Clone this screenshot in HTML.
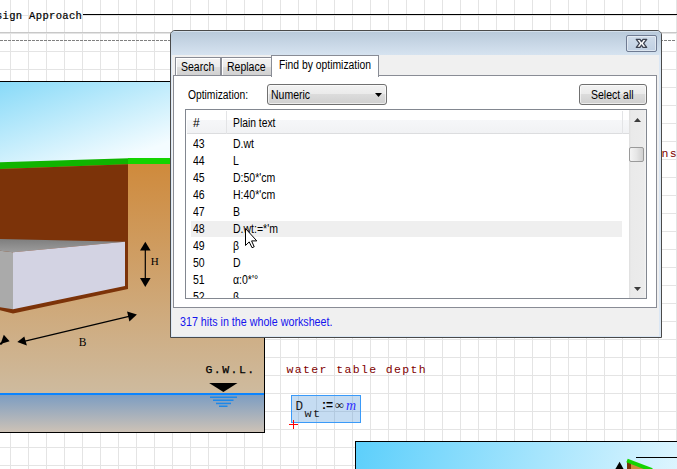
<!DOCTYPE html>
<html><head><meta charset="utf-8">
<style>
html,body{margin:0;padding:0;}
body{width:677px;height:469px;overflow:hidden;position:relative;background:#fff;font-family:"Liberation Sans",sans-serif;}
.abs{position:absolute;}
#grid{position:absolute;left:0;top:0;width:677px;height:469px;
 background-image:linear-gradient(to right,#e4e4e4 1px,transparent 1px),linear-gradient(to bottom,#e4e4e4 1px,transparent 1px);
 background-size:18px 18px;background-position:10px 0,0 15px;}
.mono{font-family:"Liberation Mono",monospace;white-space:pre;}
.ui{font-family:"Liberation Sans",sans-serif;font-size:12px;white-space:pre;color:#000;}
.sx{display:inline-block;transform-origin:0 0;transform:scaleX(0.875);}
</style></head><body>
<div id="grid"></div>

<!-- header -->
<div class="abs mono" style="left:-17.3px;top:10px;font-size:10.5px;line-height:13px;letter-spacing:0.33px;color:#000;-webkit-text-stroke:0.2px #000;">Design Approach</div>
<div class="abs" style="left:83px;top:14px;width:594px;height:1px;background:#000;"></div>
<div class="abs" style="left:0;top:32px;width:677px;height:1px;background:#c8c8c8;"></div>
<div class="abs" style="left:0;top:40px;width:676px;height:1px;background-image:linear-gradient(to right,#808080 3px,transparent 3px);background-size:4px 1px;"></div>

<!-- main illustration -->
<svg class="abs" style="left:0;top:0" width="677" height="469" viewBox="0 0 677 469">
 <defs>
  <linearGradient id="sky" gradientUnits="userSpaceOnUse" x1="0" y1="82" x2="38" y2="189">
   <stop offset="0" stop-color="#88daf8"/><stop offset="1" stop-color="#f4fcff"/>
  </linearGradient>
  <linearGradient id="soil" x1="0" y1="0" x2="0" y2="1">
   <stop offset="0" stop-color="#cf8a3c"/><stop offset="1" stop-color="#cebb9f"/>
  </linearGradient>
  <linearGradient id="water" x1="0" y1="0" x2="0" y2="1">
   <stop offset="0" stop-color="#7a9cc2"/><stop offset="1" stop-color="#cdc2b6"/>
  </linearGradient>
  <linearGradient id="topface" x1="0" y1="0" x2="0" y2="1">
   <stop offset="0" stop-color="#7e7e7e"/><stop offset="1" stop-color="#9c9c9c"/>
  </linearGradient>
  <linearGradient id="sky2" gradientUnits="userSpaceOnUse" x1="355" y1="441" x2="700" y2="540">
   <stop offset="0" stop-color="#5ccffb"/><stop offset="1" stop-color="#eefaff"/>
  </linearGradient>
 </defs>
 <!-- image 1 -->
 <rect x="-1" y="82" width="265" height="90" fill="url(#sky)"/>
 <rect x="-1" y="164" width="265" height="230" fill="url(#soil)"/>
 <rect x="-1" y="394" width="265" height="38" fill="url(#water)"/>
 <!-- grass -->
 <polygon points="-1,162.2 128,158.2 128,164.3 -1,169" fill="#10b400"/>
 <rect x="128" y="158" width="136" height="6" fill="#14d400"/>
 <!-- pit -->
 <polygon points="-1,169 128,164.3 128,289 13,313.5 -1,310" fill="#7c3309"/>
 <!-- block -->
 <polygon points="-1,239 125,241.7 13,252.3 -1,250.6" fill="url(#topface)"/>
 <polygon points="-1,250.6 13,252.3 13,309.3 -1,307" fill="#aaaaaa"/>
 <polygon points="13,252.3 125,241.7 125,286 13,309.3" fill="#d3d3e3"/>
 <!-- H arrow -->
 <line x1="145.3" y1="249" x2="145.3" y2="280" stroke="#000" stroke-width="1.2"/>
 <polygon points="140,250.6 150.6,250.6 145.3,241.7" fill="#000"/>
 <polygon points="140,278 150.6,278 145.3,287" fill="#000"/>
 <text x="150.8" y="265.3" font-family="Liberation Serif" font-size="11" fill="#000">H</text>
 <!-- B arrow -->
 <line x1="24" y1="341.3" x2="129" y2="316.3" stroke="#000" stroke-width="1.3"/>
 <polygon points="17.3,341.9 24.3,336.4 26.9,345.4" fill="#000"/>
 <polygon points="127.1,311.6 136.9,314.5 129.4,321.5" fill="#000"/>
 <polygon points="9.6,341.2 3.8,334.8 0.5,344" fill="#000"/>
 <polygon points="-1,343 3,342 2,344.5 -1,345" fill="#000"/>
 <text x="78.8" y="346.3" font-family="Liberation Serif" font-size="11.5" fill="#000">B</text>
 <!-- GWL -->
 <text x="205.5" y="373" font-family="Liberation Mono" font-size="11.5" letter-spacing="1.45" fill="#000" stroke="#000" stroke-width="0.25">G.W.L.</text>
 <polygon points="209.1,382.9 237.5,382.9 223.4,392.1" fill="#000"/>
 <rect x="-1" y="393" width="265" height="2" fill="#0a84ff"/>
 <rect x="210" y="396.5" width="27" height="1.5" fill="#1e88e8"/>
 <rect x="213" y="399.5" width="20.5" height="1.5" fill="#1e88e8"/>
 <rect x="216" y="402.7" width="15" height="1.5" fill="#1e88e8"/>
 <rect x="219" y="405.5" width="8.5" height="1.5" fill="#1e88e8"/>
 <!-- border -->
 <rect x="-2" y="81.5" width="266.5" height="351" fill="none" stroke="#000" stroke-width="1"/>

 <!-- image 2 (bottom right) -->
 <rect x="355.5" y="441.5" width="330" height="40" fill="url(#sky2)" stroke="#000" stroke-width="1"/>
 <line x1="636" y1="457.5" x2="677" y2="457.5" stroke="#000" stroke-width="1.2"/>
 <polygon points="619.6,461.7 614.8,470 624.1,470" fill="#000"/>
 <polygon points="627,461 631,462.5 631,470 627,470" fill="#7a3309"/>
 <polygon points="631,462.5 651,470 631,470" fill="#cf8a3c"/>
 <line x1="627" y1="460.5" x2="652" y2="470" stroke="#14d400" stroke-width="4"/>
</svg>

<!-- text right side -->
<div class="abs mono" style="left:286.5px;top:362px;font-size:11.5px;line-height:15px;letter-spacing:1.37px;color:#800000;">water table depth</div>
<div class="abs mono" style="left:661.5px;top:146px;font-size:11.5px;line-height:15px;letter-spacing:1.37px;color:#800000;">ns</div>

<!-- math region -->
<div class="abs" style="left:291px;top:395px;width:68px;height:26px;background:rgba(80,150,215,0.33);border:1px solid #3a9af8;"></div>
<div class="abs mono" style="left:295.5px;top:399.5px;font-size:12.6px;line-height:15px;color:#1a1a1a;">D</div>
<div class="abs mono" style="left:304.5px;top:407.3px;font-size:11.8px;line-height:15px;letter-spacing:1.4px;color:#1a1a1a;">wt</div>
<div class="abs" style="left:322px;top:397.5px;font-size:12px;line-height:15px;color:#000;font-family:'Liberation Sans';font-weight:bold;">:=</div>
<div class="abs" style="left:335px;top:398px;font-size:12px;line-height:15px;color:#000;font-family:'Liberation Serif';font-weight:bold;">∞</div>
<div class="abs" style="left:346px;top:398px;font-size:14px;line-height:15px;color:#3030ff;font-family:'Liberation Serif';font-style:italic;">m</div>
<!-- red cross -->
<div class="abs" style="left:289px;top:424px;width:9px;height:1px;background:#ff0000;"></div>
<div class="abs" style="left:293px;top:420px;width:1px;height:9px;background:#ff0000;"></div>

<!-- dialog -->
<div class="abs" style="left:170px;top:30px;width:490px;height:306px;border:1px solid #4a4a4a;border-radius:5px 5px 0 0;background:#dbe7f4;overflow:hidden;">
  <div class="abs" style="left:0;top:0;width:490px;height:24px;background:linear-gradient(#b8c9da,#d6e3f0);"></div>
  <div class="abs" style="left:3px;top:0;width:484px;height:1px;background:#d4e0ec;"></div>
  <div class="abs" style="left:1px;top:24px;width:487px;height:281px;background:#f0f0f0;"></div>
  <!-- close btn -->
  <div class="abs" style="left:455px;top:4px;width:29px;height:15px;border:1px solid #6f7b92;border-radius:2px;background:linear-gradient(#d0dcea,#c0d0e2);box-shadow:inset 0 0 0 1px rgba(255,255,255,0.45);"></div>
  <svg class="abs" style="left:464px;top:7px" width="13" height="11" viewBox="0 0 13 11">
    <polygon points="1.3,1.3 5,1.3 6.5,3.6 8,1.3 11.7,1.3 8.6,5.3 11.7,9.3 8,9.3 6.5,7 5,9.3 1.3,9.3 4.4,5.3" fill="#fafafa" stroke="#3c4250" stroke-width="1.3" stroke-linejoin="round"/>
  </svg>
  <!-- tabs -->
  <div class="abs" style="left:4px;top:26px;width:44px;height:18px;border:1px solid #898c95;border-bottom:none;background:linear-gradient(#f3f3f3 0%,#ebebeb 50%,#dddddd 50%,#cfcfcf 100%);box-shadow:inset 1px 1px 0 #fff;"></div>
  <div class="abs" style="left:50px;top:26px;width:49px;height:18px;border:1px solid #898c95;border-bottom:none;background:linear-gradient(#f3f3f3 0%,#ebebeb 50%,#dddddd 50%,#cfcfcf 100%);box-shadow:inset 1px 1px 0 #fff;"></div>
  <!-- panel -->
  <div class="abs" style="left:2px;top:44px;width:482px;height:231px;border:1px solid #898c95;background:#fff;"></div>
  <!-- selected tab -->
  <div class="abs" style="left:100px;top:24px;width:106px;height:21px;border:1px solid #898c95;border-bottom:none;background:#fff;"></div>
  <div class="abs ui" style="left:10px;top:29px;"><span class="sx">Search</span></div>
  <div class="abs ui" style="left:56px;top:29px;"><span class="sx">Replace</span></div>
  <div class="abs ui" style="left:108px;top:27px;"><span class="sx" style="transform:scaleX(0.862)">Find by optimization</span></div>
  <!-- optimization row -->
  <div class="abs ui" style="left:17px;top:57px;"><span class="sx" style="transform:scaleX(0.857)">Optimization:</span></div>
  <div class="abs" style="left:96px;top:53px;width:118px;height:19px;border:1px solid #707070;border-radius:3px;background:linear-gradient(#f2f2f2 0%,#ebebeb 45%,#dddddd 45%,#cfcfcf 100%);box-shadow:inset 0 0 0 1px rgba(255,255,255,0.6);"></div>
  <div class="abs ui" style="left:100px;top:57px;"><span class="sx">Numeric</span></div>
  <svg class="abs" style="left:204px;top:62px" width="8" height="5"><polygon points="0,0 7,0 3.5,4" fill="#000"/></svg>
  <div class="abs" style="left:408px;top:53px;width:66px;height:19px;border:1px solid #707070;border-radius:3px;background:linear-gradient(#f2f2f2 0%,#ebebeb 45%,#dddddd 45%,#cfcfcf 100%);box-shadow:inset 0 0 0 1px rgba(255,255,255,0.6);"></div>
  <div class="abs ui" style="left:420px;top:57px;"><span class="sx">Select all</span></div>
  <!-- listview -->
  <div class="abs" style="left:14px;top:78px;width:460px;height:188px;border:1px solid #828790;background:#fff;overflow:hidden;">
    <div class="abs" style="left:1px;top:0;width:442px;height:23px;background:linear-gradient(#ffffff 0%,#ffffff 42%,#f6f7f9 42%,#f1f2f4 100%);border-bottom:1px solid #dcdddf;"></div>
    <div class="abs" style="left:40px;top:1px;width:1px;height:23px;background:#e3e4e6;"></div>
    <div class="abs" style="left:436px;top:1px;width:1px;height:23px;background:#e3e4e6;"></div>
    <div class="abs ui" style="left:7px;top:6px;"><span class="sx" style="transform:none">#</span></div>
    <div class="abs ui" style="left:47px;top:6px;"><span class="sx" style="transform:scaleX(0.86)">Plain text</span></div>
    <!-- hover row -->
    <div class="abs" style="left:5px;top:111px;width:431px;height:16px;background:#efefef;"></div>
    <div class="abs ui" style="left:7px;top:26px;line-height:17px;"><span class="sx">43
44
45
46
47
48
49
50
51
52</span></div>
    <div class="abs ui" style="left:47px;top:26px;line-height:17px;"><span class="sx">D.wt
L
D:50*'cm
H:40*'cm
B
D.wt:=*'m
β
D
α:0*'°
β</span></div>
    <!-- scrollbar -->
    <div class="abs" style="left:443px;top:0;width:17px;height:188px;background:linear-gradient(to right,#dedede 0px,#eaeaea 2px,#ececec 15px,#f4f4f4 17px);"></div>
    <svg class="abs" style="left:448px;top:8px" width="9" height="5"><polygon points="0,4 7,4 3.5,0" fill="#3c3c3c"/></svg>
    <div class="abs" style="left:443px;top:37px;width:13px;height:13px;border:1px solid #9a9a9a;border-radius:2px;background:linear-gradient(to right,#f4f4f4,#e6e6e6 50%,#d0d0d0);"></div>
    <svg class="abs" style="left:447.5px;top:177px" width="9" height="5"><polygon points="0,0 7,0 3.5,4" fill="#3c3c3c"/></svg>
  </div>
  <div class="abs ui" style="left:9px;top:283.5px;color:#1414ee;"><span class="sx" style="transform:scaleX(0.893)">317 hits in the whole worksheet.</span></div>
</div>

<!-- mouse cursor -->
<svg class="abs" style="left:244px;top:227px" width="15" height="23" viewBox="0 0 15 23">
 <path d="M1.5,1.5 L1.5,18.5 L5.2,14.9 L8,20.7 L10.2,19.8 L7.6,13.9 L12.8,13.9 Z" fill="#fff" stroke="#000" stroke-width="1" stroke-linejoin="miter"/>
</svg>
</body></html>
